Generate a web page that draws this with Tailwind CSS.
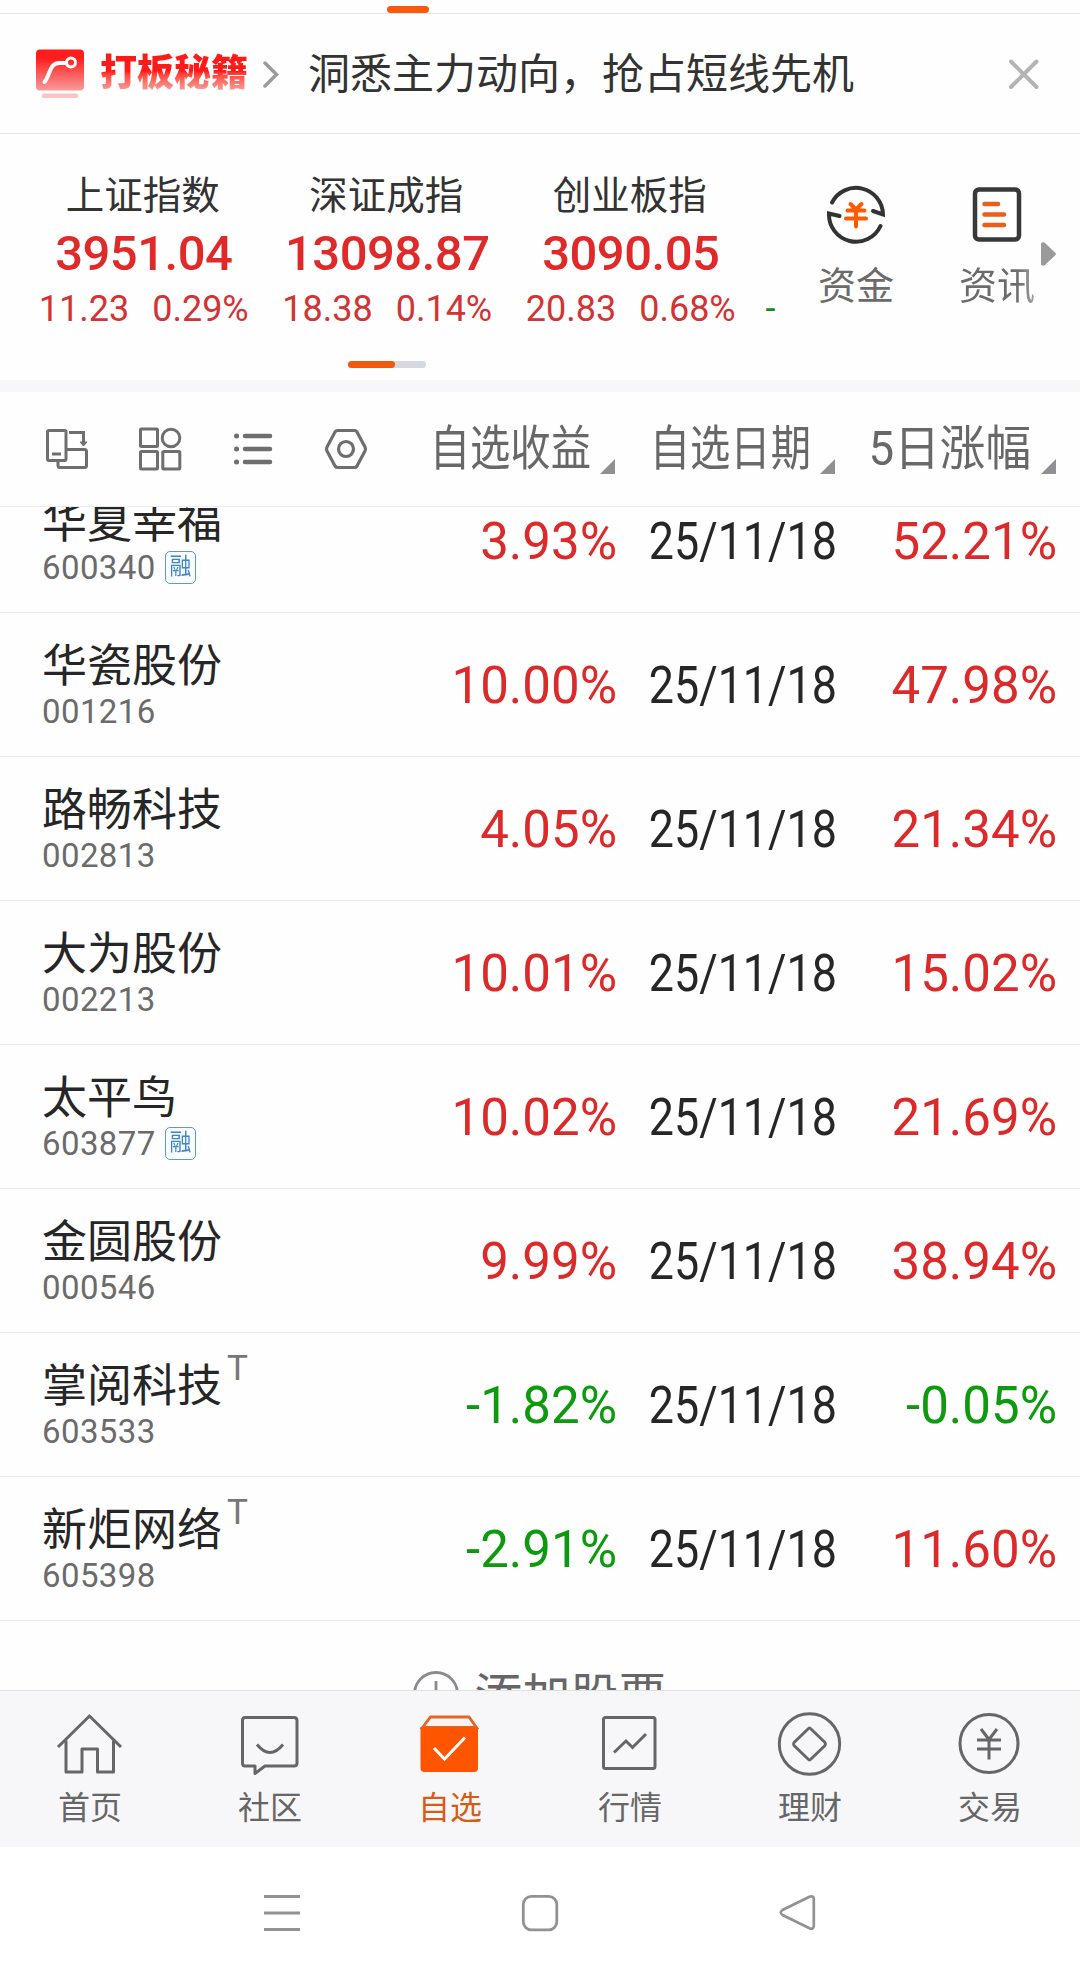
<!DOCTYPE html>
<html lang="zh-CN">
<head>
  <meta charset="UTF-8">
  <meta name="viewport" content="width=device-width, initial-scale=1.0">
  <title>自选</title>
  <script src="https://cdn.jsdelivr.net/npm/@tailwindcss/browser@4"></script>
</head>
<body class="bg-white">
<div class="w-[1080px] h-[1979px] overflow-hidden flex flex-col bg-[#fefefe] font-['Roboto','Noto_Sans_CJK_SC',sans-serif] text-[#262626] whitespace-nowrap">

  <!-- top tab underline -->
  <div class="h-[14px] shrink-0 border-b border-[#e6e6e6] pl-[387px] pt-[6px]">
    <div class="w-[42px] h-[7px] rounded-full bg-[#fa5a0a]"></div>
  </div>

  <!-- promo banner -->
  <div class="h-[120px] shrink-0 border-b border-[#e6e6e6] flex items-center pl-9 pr-[41px]">
    <svg class="w-12 h-[50px] shrink-0" viewBox="0 0 48 50" fill="none">
      <defs>
        <linearGradient id="logo" x1="0" y1="0" x2="0" y2="1">
          <stop offset="0.2" stop-color="#ff1c1c"/>
          <stop offset="1" stop-color="#f99a9a"/>
        </linearGradient>
      </defs>
      <rect x="0" y="0.5" width="48" height="41" rx="4" fill="url(#logo)"/>
      <path d="M8.500 33 C14 27 13 14.500 23 14 H30" stroke="#fff" stroke-width="4" stroke-linecap="round"/>
      <circle cx="35" cy="13.500" r="4.500" stroke="#fff" stroke-width="3"/>
      <rect x="6" y="44.500" width="36" height="4.500" rx="1.500" fill="#f8c4c4"/>
    </svg>
    <span class="ml-4 pt-px text-[37px] leading-[44px] font-black bg-linear-to-b from-[#ff1a1a] from-45% to-[#f7a0a0] to-90% bg-clip-text text-transparent">打板秘籍</span>
    <svg class="ml-[15px] w-4 h-[30px] shrink-0" viewBox="0 0 16 30" fill="none">
      <path d="M2 4 L13.500 15.500 L2 27" stroke="#9b9b9b" stroke-width="3.500" stroke-linecap="round"/>
    </svg>
    <span class="ml-[29px] pt-[2px] text-[42px] leading-[50px] text-[#333]">洞悉主力动向，抢占短线先机</span>
    <svg class="ml-auto w-[30px] h-[30px] shrink-0" viewBox="0 0 30 30" fill="none">
      <path d="M2 2.500 L27.500 28 M27.500 2.500 L2 28" stroke="#b4b4b4" stroke-width="4" stroke-linecap="round"/>
    </svg>
  </div>

  <!-- market indices -->
  <div class="relative h-[246px] shrink-0 flex pl-[22px]">
    <div class="w-[757px] shrink-0 overflow-hidden flex pt-[38px]">
      <div class="w-[243.500px] shrink-0 flex flex-col items-center">
        <span class="mr-[2px] text-[38.500px] leading-[48px] text-[#333]">上证指数</span>
        <span class="mt-[6px] text-[49px] leading-[56px] font-medium tracking-[-0.500px] text-[#e02a2a]">3951.04</span>
        <span class="mt-[7px] text-[36px] leading-[40px] text-[#d23434] flex gap-[23px]"><span>11.23</span><span>0.29%</span></span>
      </div>
      <div class="w-[243.500px] shrink-0 flex flex-col items-center">
        <span class="mr-[2px] text-[38.500px] leading-[48px] text-[#333]">深证成指</span>
        <span class="mt-[6px] text-[49px] leading-[56px] font-medium tracking-[-0.500px] text-[#e02a2a]">13098.87</span>
        <span class="mt-[7px] text-[36px] leading-[40px] text-[#d23434] flex gap-[23px]"><span>18.38</span><span>0.14%</span></span>
      </div>
      <div class="w-[243.500px] shrink-0 flex flex-col items-center">
        <span class="mr-[2px] text-[38.500px] leading-[48px] text-[#333]">创业板指</span>
        <span class="mt-[6px] text-[49px] leading-[56px] font-medium tracking-[-0.500px] text-[#e02a2a]">3090.05</span>
        <span class="mt-[7px] text-[36px] leading-[40px] text-[#d23434] flex gap-[23px]"><span>20.83</span><span>0.68%</span></span>
      </div>
      <span class="pl-[13px] mt-[117px] text-[36px] leading-[40px] text-[#178a17]">-</span>
    </div>

    <div class="w-[154px] pt-[50px] flex flex-col items-center">
      <svg class="w-[60px] h-[60px]" viewBox="0 0 60 60" fill="none" stroke-linecap="round">
        <g stroke="#333" stroke-width="4">
          <path d="M6 18.500 A27 27 0 0 1 57 30.500 L47 27"/>
          <path d="M54.500 42 A27 27 0 0 1 3 29.500 L13.500 32"/>
        </g>
        <path d="M24.500 20 L30 25.500 L35.500 20 M21.500 26.500 H38.500 M20 34.500 H40 M30 25 V42.500" stroke="#ff5a00" stroke-width="4"/>
      </svg>
      <span class="mt-[19px] text-[38px] leading-[46px] text-[#6b6b6b]">资金</span>
    </div>
    <div class="w-[128px] pt-[50px] flex flex-col items-center">
      <svg class="w-[60px] h-[60px]" viewBox="0 0 60 60" fill="none" stroke-linecap="round">
        <rect x="8" y="5.500" width="44" height="50" rx="4" stroke="#383838" stroke-width="4.500"/>
        <path d="M17.500 20 H31 M17.500 30.500 H37 M17.500 41 H37" stroke="#e8601a" stroke-width="4.500"/>
      </svg>
      <span class="mt-[19px] text-[38px] leading-[46px] bg-linear-to-r from-[#6b6b6b] from-75% to-[#a0a0a0] bg-clip-text text-transparent">资讯</span>
    </div>
    <svg class="absolute left-[1041px] top-[108px] w-4 h-6" viewBox="0 0 16 24">
      <path d="M0 1.500 Q2 -1 4.500 1.500 L14.500 11 Q15.500 12 14.500 13 L4.500 22.500 Q2 25 0 22.500 Z" fill="#9a9a9a"/>
    </svg>
    <div class="absolute left-[348px] top-[227px] w-[78px] h-[7px] rounded-full bg-[#d5d8dc]">
      <div class="w-[47px] h-[7px] rounded-full bg-[#f05a10]"></div>
    </div>
  </div>
  <div class="h-3 shrink-0 bg-[#f6f7f9]"></div>

  <!-- list header -->
  <div class="h-[115px] shrink-0 border-b border-[#ececec] grid grid-cols-[1fr_220px_220px_221px] items-center pl-[45px] pr-6 text-[#686868]">
    <div class="flex gap-12 stroke-[#6e6e6e]">
      <svg class="w-[45px] h-[45px] shrink-0" viewBox="0 0 45 45" fill="none" stroke-width="3">
        <rect x="2.500" y="3.500" width="18.500" height="30" rx="1.500"/>
        <path d="M7 27 H16" />
        <path d="M24 5.500 H38.500 V16"/>
        <path d="M35 15 H42 L38.500 19 Z" fill="#6e6e6e" stroke-width="1"/>
        <path d="M21 22.500 H39.500 Q41.500 22.500 41.500 24.500 V38.500 Q41.500 40.500 39.500 40.500 H15 Q13 40.500 13 38.500 V33.500"/>
      </svg>
      <svg class="w-[45px] h-[45px] shrink-0" viewBox="0 0 45 45" fill="none" stroke-width="3">
        <rect x="2.500" y="2" width="17" height="17.500" rx="1"/>
        <circle cx="33" cy="11" r="8.800"/>
        <rect x="2.500" y="24.500" width="17" height="17.500" rx="1"/>
        <rect x="24.800" y="24.500" width="17" height="17.500" rx="1"/>
      </svg>
      <svg class="w-[45px] h-[45px] shrink-0" viewBox="0 0 45 45" fill="none" stroke-width="4.500" stroke-linecap="round">
        <path d="M5.500 9 H5.600 M5.500 22 H5.600 M5.500 35 H5.600" stroke-width="5"/>
        <path d="M14 9 H39 M14 22 H39 M14 35 H39"/>
      </svg>
      <svg class="w-[45px] h-[45px] shrink-0" viewBox="0 0 45 45" fill="none" stroke-width="3.200">
        <path d="M13.500 3.500 H30.500 Q32 3.500 33 5 L41 20 Q42 22 41 24 L33 39 Q32 40.500 30.500 40.500 H13.500 Q12 40.500 11 39 L3 24 Q2 22 3 20 L11 5 Q12 3.500 13.500 3.500 Z"/>
        <circle cx="22" cy="22" r="7.500"/>
      </svg>
    </div>
    <div class="flex justify-end items-end gap-[9px]">
      <span class="text-[48px] leading-[60px] origin-right scale-x-[0.84]">自选收益</span>
      <svg class="w-[15px] h-[15px] mb-[5px] shrink-0" viewBox="0 0 15 15"><path d="M15 0 V15 H0 Z" fill="#8f8f94"/></svg>
    </div>
    <div class="flex justify-end items-end gap-[9px]">
      <span class="text-[48px] leading-[60px] origin-right scale-x-[0.84]">自选日期</span>
      <svg class="w-[15px] h-[15px] mb-[5px] shrink-0" viewBox="0 0 15 15"><path d="M15 0 V15 H0 Z" fill="#8f8f94"/></svg>
    </div>
    <div class="flex justify-end items-end gap-[10px]">
      <span class="text-[48px] leading-[60px] origin-right scale-x-[0.95]">5日涨幅</span>
      <svg class="w-[15px] h-[15px] mb-[5px] shrink-0" viewBox="0 0 15 15"><path d="M15 0 V15 H0 Z" fill="#8f8f94"/></svg>
    </div>
  </div>

  <!-- stock list, scrolled -->
  <div class="h-[1183px] shrink-0 overflow-hidden">
    <div id="stocks" class="-mt-[38px]"></div>
    <div class="flex items-center justify-center pt-[42px] text-[#666]">
      <svg class="w-[46px] h-[46px] mr-[15px] mb-[2px]" viewBox="0 0 46 46" fill="none" stroke="#8a8a8e" stroke-width="2.800">
        <circle cx="23" cy="23" r="21.500"/>
        <path d="M23 10 V36 M10 23 H36"/>
      </svg>
      <span class="pt-[4px] text-[48px] leading-[60px]">添加股票</span>
    </div>
  </div>

  <!-- bottom tabs -->
  <div class="h-[157px] shrink-0 border-t border-[#e2e2e2] bg-[#f7f7fa] grid grid-cols-6 text-[32px] leading-[40px] text-[#666]">
    <div class="flex flex-col items-center pt-[19px]">
      <svg class="w-[70px] h-[70px] mb-[8px]" viewBox="0 0 70 70" fill="none" stroke="#666" stroke-width="3">
        <path d="M3 37 L34.500 6 L66 37"/>
        <path d="M11 30.500 V62 H27 V39 H42.500 V62 H58.500 V30.500" stroke-linejoin="round"/>
      </svg>
      <span>首页</span>
    </div>
    <div class="flex flex-col items-center pt-[19px]">
      <svg class="w-[70px] h-[70px] mb-[8px]" viewBox="0 0 70 70" fill="none" stroke="#666" stroke-width="3" stroke-linejoin="round">
        <path d="M10 7.500 H59 Q62 7.500 62 10.500 V53 Q62 56 59 56 H30 L20 63.500 V56 H10 Q7.500 56 7.500 53 V10.500 Q7.500 7.500 10 7.500 Z"/>
        <path d="M22 34.500 Q35 50.500 48 34.500"/>
      </svg>
      <span>社区</span>
    </div>
    <div class="flex flex-col items-center pt-[19px] text-[#d95b18]">
      <svg class="w-[70px] h-[70px] mb-[8px]" viewBox="0 0 70 70" fill="none">
        <path d="M15.500 7 H54 L61.500 17.500 H7.500 Z" fill="#fbf3ee" stroke="#e0662a" stroke-width="2.800"/>
        <path d="M5.500 17 H63 V58 Q63 62 59 62 H9.500 Q5.500 62 5.500 58 Z" fill="#ff5400"/>
        <path d="M19 38 L29.500 49 L50 27.500" stroke="#fff" stroke-width="3"/>
      </svg>
      <span>自选</span>
    </div>
    <div class="flex flex-col items-center pt-[19px]">
      <svg class="w-[70px] h-[70px] mb-[8px]" viewBox="0 0 70 70" fill="none" stroke="#666" stroke-width="3">
        <rect x="8.500" y="7.500" width="51.500" height="51" rx="2"/>
        <path d="M19 42.500 L31 31 L37.500 37.500 L51 24"/>
      </svg>
      <span>行情</span>
    </div>
    <div class="flex flex-col items-center pt-[19px]">
      <svg class="w-[70px] h-[70px] mb-[8px]" viewBox="0 0 70 70" fill="none" stroke="#666" stroke-width="2.900" stroke-linejoin="round">
        <circle cx="34.500" cy="34" r="30.200"/>
        <path d="M33 19 Q34.500 17 36 19 L50 32.500 Q51 34 50 35.500 L36 49 Q34.500 51 33 49 L19 35.500 Q18 34 19 32.500 Z"/>
      </svg>
      <span>理财</span>
    </div>
    <div class="flex flex-col items-center pt-[19px]">
      <svg class="w-[70px] h-[70px] mb-[8px]" viewBox="0 0 70 70" fill="none" stroke="#666" stroke-width="3">
        <circle cx="34" cy="33.500" r="29"/>
        <path d="M26 19 L34 29.500 L42 19 M22 30 H46 M22 39 H46 M34 29.500 V49.500"/>
      </svg>
      <span>交易</span>
    </div>
  </div>

  <!-- system navigation -->
  <div class="h-[132px] shrink-0 flex justify-center items-center gap-[218px] bg-white">
    <svg class="w-10 h-10" viewBox="0 0 40 40" stroke="#929292" stroke-width="3">
      <path d="M2 3.500 H38 M2 20 H38 M2 36.500 H38"/>
    </svg>
    <svg class="w-10 h-10" viewBox="0 0 40 40" fill="none" stroke="#929292" stroke-width="2.800">
      <rect x="3.300" y="3.300" width="33.500" height="33.500" rx="8"/>
    </svg>
    <svg class="w-10 h-10" viewBox="0 0 40 40" fill="none" stroke="#929292" stroke-width="2.700">
      <path d="M31.500 3.800 Q35.500 2 35.800 6 V33 Q35.500 37 31.500 35.200 L4.500 22 Q1 19.500 4.500 17 Z"/>
    </svg>
  </div>
</div>

<script>
  const stocks = [
    { name: "华夏幸福", code: "600340", margin: true, gain: "3.93%", five: "52.21%" },
    { name: "华瓷股份", code: "001216", gain: "10.00%", five: "47.98%" },
    { name: "路畅科技", code: "002813", gain: "4.05%", five: "21.34%" },
    { name: "大为股份", code: "002213", gain: "10.01%", five: "15.02%" },
    { name: "太平鸟", code: "603877", margin: true, gain: "10.02%", five: "21.69%" },
    { name: "金圆股份", code: "000546", gain: "9.99%", five: "38.94%" },
    { name: "掌阅科技", code: "603533", t: true, gain: "-1.82%", five: "-0.05%" },
    { name: "新炬网络", code: "605398", t: true, gain: "-2.91%", five: "11.60%" },
  ];

  // red for a rise, green for a fall
  function color(value) {
    return value.startsWith("-") ? "text-[#0e9a0e]" : "text-[#dc2a2a]";
  }

  document.getElementById("stocks").innerHTML = stocks.map(s => `
    <div class="h-36 border-b border-[#ececec] grid grid-cols-[1fr_221px_220px_220px] pl-[42px] pr-[23px] text-[51px] leading-[145px] text-right">
      <div class="pt-[28px] text-left">
        <div class="flex h-[52px] text-[45px] leading-[51px]">
          <span>${s.name}</span>
          ${s.t ? '<span class="-mt-[10px] ml-[5px] text-[35px] leading-[36px] text-[#777]">T</span>' : ""}
        </div>
        <div class="flex items-center text-[33px] leading-[37px] text-[#6b6b6b]">
          <span class="tracking-[0.400px]">${s.code}</span>
          ${s.margin ? '<span class="ml-[9px] w-[31px] h-[33px] rounded-[5px] border-[1.500px] border-[#5b9bd0] bg-[#fafdff] text-[23px] leading-[30px] text-center text-[#3f86c4]"><span class="inline-block scale-x-[0.95]">融</span></span>' : ""}
        </div>
      </div>
      <span class="${color(s.gain)}">${s.gain}</span>
      <span><span class="inline-block origin-right scale-x-[0.88]">25/11/18</span></span>
      <span class="${color(s.five)}">${s.five}</span>
    </div>`).join("");
</script>
</body>
</html>
